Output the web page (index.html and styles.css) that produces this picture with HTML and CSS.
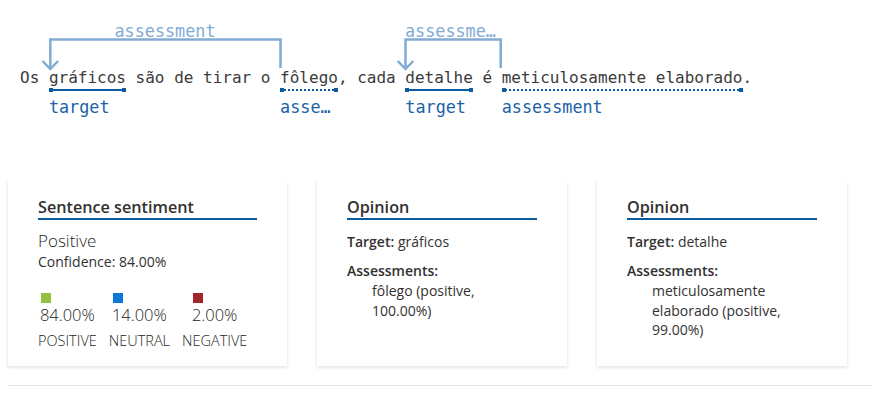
FILE: index.html
```html
<!DOCTYPE html>
<html lang="pt">
<head>
<meta charset="utf-8">
<title>Opinion mining</title>
<link rel="stylesheet" href="styles.css">
</head>
<body>
<div class="page">
  <div class="sentence-wrap">
    <svg class="arcs" width="865" height="80" viewBox="0 0 865 80" aria-hidden="true">
      <path class="arc" d="M272.5 68 V39.5 H42.3 V69"/>
      <path class="arc" d="M34.5 61 L42.3 69 L50.1 61"/>
      <path class="arc" d="M492.7 68 V39.5 H397.5 V69"/>
      <path class="arc" d="M389.7 61 L397.5 69 L405.3 61"/>
    </svg>
    <span class="arc-label arc-label-1">assessment</span>
    <span class="arc-label arc-label-2">assessment</span>
    <p class="sentence">Os <span class="tok target">gráficos<span class="tag">target</span></span> são de tirar o <span class="tok assess">fôlego<span class="tag">assessment</span></span>, cada <span class="tok target">detalhe<span class="tag">target</span></span> é <span class="tok assess">meticulosamente elaborado<span class="tag">assessment</span></span>.</p>
  </div>

  <div class="cards">
    <section class="card card-wide">
      <h2 class="card-title">Sentence sentiment</h2>
      <div class="overall">Positive</div>
      <div class="confidence">Confidence: 84.00%</div>
      <div class="scores">
        <div class="score">
          <div class="score-top"><span class="swatch pos"></span><span class="score-val">84.00%</span></div>
          <span class="score-name">POSITIVE</span>
        </div>
        <div class="score">
          <div class="score-top"><span class="swatch neu"></span><span class="score-val">14.00%</span></div>
          <span class="score-name">NEUTRAL</span>
        </div>
        <div class="score">
          <div class="score-top"><span class="swatch neg"></span><span class="score-val">2.00%</span></div>
          <span class="score-name">NEGATIVE</span>
        </div>
      </div>
    </section>

    <section class="card">
      <h2 class="card-title">Opinion</h2>
      <div class="target-line"><span class="key">Target:</span> gráficos</div>
      <div class="assess-head">Assessments:</div>
      <ul class="assess-list">
        <li>fôlego (positive, 100.00%)</li>
      </ul>
    </section>

    <section class="card">
      <h2 class="card-title">Opinion</h2>
      <div class="target-line"><span class="key">Target:</span> detalhe</div>
      <div class="assess-head">Assessments:</div>
      <ul class="assess-list">
        <li>meticulosamente elaborado (positive, 99.00%)</li>
      </ul>
    </section>
  </div>

  <div class="rule"></div>
</div>
</body>
</html>
```
FILE: styles.css
```css
html, body {
  margin: 0;
  padding: 0;
  background: #ffffff;
}

.page {
  padding: 0 0 0 8px;
  font-family: "Open Sans", "Noto Sans", sans-serif;
  color: #323130;
}

/* ---------- annotated sentence ---------- */
.sentence-wrap {
  position: relative;
  padding-bottom: 92px;
}

.arcs {
  position: absolute;
  left: 0;
  top: 0;
}

.arc {
  fill: none;
  stroke: #82abd4;
  stroke-width: 2.5;
}

.arc-label {
  position: absolute;
  top: 21px;
  font-family: "DejaVu Sans Mono", monospace;
  font-size: 16.8px;
  line-height: 20px;
  color: #82abd4;
  white-space: nowrap;
  overflow: hidden;
  text-overflow: ellipsis;
  text-align: center;
}

.arc-label-1 {
  left: 42px;
  width: 230px;
}

.arc-label-2 {
  left: 397px;
  width: 95px;
}

.sentence {
  margin: 0;
  padding: 68px 0 0 12px;
  font-family: "DejaVu Sans Mono", monospace;
  font-size: 16px;
  line-height: 20px;
  color: #3b3b3b;
  white-space: nowrap;
}

.tok {
  position: relative;
  display: inline-block;
}

.tok::before {
  content: "";
  position: absolute;
  left: 0;
  right: 0;
  top: 21px;
  height: 2px;
  background: #0c5aa2;
}

.tok.assess::before {
  background: none;
  height: 0;
  border-top: 2px dotted #0c5aa2;
}

.tok::after {
  content: "";
  position: absolute;
  left: 0;
  right: 0;
  top: 20px;
  height: 4px;
  background:
    linear-gradient(#0c5aa2, #0c5aa2) left top / 4px 4px no-repeat,
    linear-gradient(#0c5aa2, #0c5aa2) right top / 4px 4px no-repeat;
}

.tag {
  position: absolute;
  left: 0;
  top: 29px;
  width: 100%;
  font-size: 16.8px;
  line-height: 20px;
  color: #1a62a8;
  white-space: nowrap;
  overflow: hidden;
  text-overflow: ellipsis;
}

/* ---------- cards ---------- */
.cards {
  display: flex;
  gap: 30px;
  align-items: stretch;
}

.card {
  width: 250px;
  box-sizing: border-box;
  padding: 16px 30px 15px;
  background: #fff;
  box-shadow: 0 1.6px 3.6px rgba(0, 0, 0, 0.13), 0 0.3px 0.9px rgba(0, 0, 0, 0.11);
}

.card-wide {
  width: 279px;
}

.card-title {
  margin: 0;
  font-size: 16.2px;
  font-weight: 600;
  line-height: 22px;
  color: #323130;
  border-bottom: 2px solid #0b5a9e;
}

.overall {
  margin-top: 10px;
  font-size: 17px;
  line-height: 22px;
  font-weight: 300;
  color: #252423;
}

.confidence {
  font-size: 14px;
  line-height: 20px;
}

.scores {
  display: flex;
  gap: 12px;
  margin-top: 21px;
}

.score {
  display: flex;
  flex-direction: column;
  align-items: center;
}

.score-top {
  display: flex;
  flex-direction: column;
  align-items: flex-start;
}

.swatch {
  width: 10px;
  height: 10px;
  margin-left: 1px;
}

.swatch.pos { background: #92c13e; }
.swatch.neu { background: #0a78d4; }
.swatch.neg { background: #a4262c; }

.score-val {
  margin-top: 1px;
  font-size: 16.5px;
  line-height: 22px;
  font-weight: 300;
  color: #252423;
}

.score-name {
  margin-top: 5px;
  font-size: 14.5px;
  line-height: 20px;
  font-weight: 300;
  color: #252423;
}

.target-line {
  margin-top: 12px;
  font-size: 14px;
  line-height: 20px;
}

.key {
  font-weight: 600;
}

.assess-head {
  margin-top: 9px;
  font-size: 14px;
  line-height: 20px;
  font-weight: 600;
}

.assess-list {
  margin: 0;
  padding: 0 20px 0 25px;
  list-style: none;
  font-size: 14px;
  line-height: 19.5px;
}

/* ---------- bottom rule ---------- */
.rule {
  margin-top: 19px;
  height: 1px;
  background: #e6e6e6;
}
```
